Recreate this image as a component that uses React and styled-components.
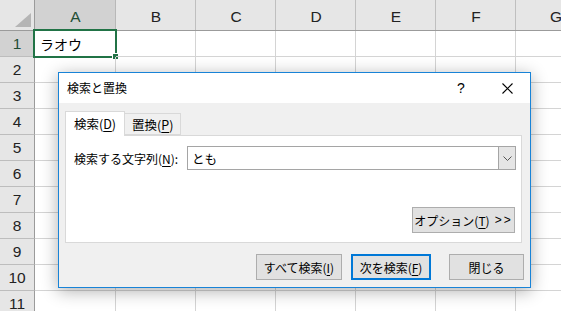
import React from "react";
import styled, { createGlobalStyle } from "styled-components";

const Global = createGlobalStyle`
  html, body { margin: 0; padding: 0; background: #fff; }
  body { width: 561px; height: 311px; overflow: hidden; }
  * { box-sizing: border-box; }
`;

const Page = styled.div`
  position: relative;
  width: 561px;
  height: 311px;
  overflow: hidden;
  font-family: "Noto Sans CJK JP", "Noto Sans", sans-serif;
`;

const Sheet = styled.div`
  display: grid;
  grid-template-columns: 35px 81px repeat(6, 80px);
  grid-template-rows: 31px;
  grid-auto-rows: 26px;
  width: 700px;
`;

const Corner = styled.div`
  background: #e6e6e6;
  border-right: 1px solid #9b9b9b;
  border-bottom: 1px solid #9b9b9b;
  display: flex;
  align-items: flex-end;
  justify-content: flex-end;
  padding: 0 3px 3px 0;
`;

const ColHeader = styled.div`
  background: ${(p) => (p.$active ? "#d2d2d2" : "#e6e6e6")};
  border-bottom: 1px solid #9b9b9b;
  box-shadow: inset -1px 0 0 ${(p) => (p.$active ? "#b8b8b8" : "#bfbfbf")};
  display: flex;
  align-items: center;
  justify-content: center;
  padding-top: 4px;
  font-family: "Liberation Sans", Arial, sans-serif;
  font-size: 15.5px;
  color: ${(p) => (p.$active ? "#1f4e35" : "#222")};
`;

const RowHeader = styled.div`
  background: ${(p) => (p.$active ? "#d2d2d2" : "#e6e6e6")};
  border-right: 1px solid #9b9b9b;
  border-bottom: 1px solid #bdbdbd;
  display: flex;
  align-items: center;
  justify-content: center;
  font-family: "Liberation Sans", Arial, sans-serif;
  font-size: 15.5px;
  color: ${(p) => (p.$active ? "#1f4e35" : "#222")};
`;

const Cell = styled.div`
  position: relative;
  border-right: 1px solid #d4d4d4;
  border-bottom: 1px solid #d4d4d4;
  display: flex;
  align-items: center;
  padding-left: 5px;
  font-size: 14px;
  color: #000;
`;

const Selection = styled.div`
  position: absolute;
  left: -2px;
  top: -2px;
  right: -2px;
  bottom: -2px;
  border: 2px solid #217346;
  pointer-events: none;
`;

const Handle = styled.div`
  position: absolute;
  right: -3px;
  bottom: -3px;
  width: 6px;
  height: 6px;
  background: #217346;
  border-left: 1px solid #fff;
  border-top: 1px solid #fff;
`;

const Dialog = styled.div`
  position: absolute;
  left: 58px;
  top: 72px;
  width: 473px;
  border: 1px solid #1883d7;
  background: #f0f0f0;
  box-shadow: 0 3px 16px rgba(0, 0, 0, 0.32);
  font-size: 12px;
  color: #000;
  display: flex;
  flex-direction: column;
`;

const TitleBar = styled.div`
  height: 30px;
  background: #fff;
  display: flex;
  align-items: center;
  padding-left: 8px;
`;

const Title = styled.div`
  flex: 1;
  padding-bottom: 1px;
`;

const TitleButton = styled.div`
  width: 46px;
  height: 30px;
  display: flex;
  align-items: center;
  justify-content: center;
  font-family: "Liberation Sans", Arial, sans-serif;
  font-size: 14px;
`;

const Body = styled.div`
  display: flex;
  flex-direction: column;
  padding: 8px 6px 7px 6px;
`;

const Tabs = styled.div`
  display: flex;
  align-items: flex-end;
  height: 24px;
  position: relative;
  z-index: 1;
`;

const Tab = styled.div`
  height: ${(p) => (p.$active ? "25px" : "22px")};
  margin-bottom: ${(p) => (p.$active ? "-1px" : "0")};
  padding: 0 ${(p) => (p.$active ? "8px" : "7px")};
  background: ${(p) => (p.$active ? "#fff" : "#f0f0f0")};
  border: 1px solid #d9d9d9;
  border-bottom: ${(p) => (p.$active ? "none" : "1px solid #d9d9d9")};
  margin-left: ${(p) => (p.$active ? "0" : "-1px")};
  display: flex;
  align-items: center;
  padding-bottom: ${(p) => (p.$active ? "2px" : "0")};
  font-size: 12.5px;
`;

const Panel = styled.div`
  height: 108px;
  margin-right: 2px;
  background: #fff;
  border: 1px solid #d9d9d9;
  padding: 10px 5px 9px 8px;
  display: flex;
  flex-direction: column;
`;

const FieldRow = styled.div`
  display: flex;
  align-items: center;
`;

const Label = styled.div`
  width: 113px;
  font-size: 12px;
`;

const Combo = styled.div`
  flex: 1;
  height: 24px;
  border: 1px solid #a5a5a5;
  display: flex;
  align-items: stretch;
`;

const ComboText = styled.div`
  flex: 1;
  display: flex;
  align-items: center;
  padding-left: 4px;
  font-size: 12.5px;
`;

const ComboButton = styled.div`
  width: 17px;
  background: #e5e5e5;
  border-left: 1px solid #a5a5a5;
  display: flex;
  align-items: center;
  justify-content: center;
`;

const OptionsRow = styled.div`
  margin-top: auto;
  display: flex;
  justify-content: flex-end;
  padding-right: 1px;
`;

const Button = styled.div`
  width: ${(p) => p.$w}px;
  height: 26px;
  background: #e1e1e1;
  border: ${(p) => (p.$focus ? "2px solid #0078d7" : "1px solid #adadad")};
  display: flex;
  align-items: center;
  justify-content: center;
  font-size: 12px;
  white-space: nowrap;
`;

const Arrows = styled.span`
  margin-left: 5px;
  letter-spacing: 2px;
  font-family: "Liberation Sans", Arial, sans-serif;
  font-size: 12px;
`;

const ButtonRow = styled.div`
  margin-top: 11px;
  display: flex;
  justify-content: flex-end;
`;

const Key = styled.span`
  text-decoration: underline;
  text-underline-offset: 2px;
`;

const Spacer = styled.div`
  width: ${(p) => p.$w}px;
`;

const cols = ["A", "B", "C", "D", "E", "F", "G"];
const rows = [1, 2, 3, 4, 5, 6, 7, 8, 9, 10, 11];

export default function App() {
  return (
    <Page>
      <Global />
      <Sheet>
        <Corner>
          <svg width="16" height="14" viewBox="0 0 16 14">
            <polygon points="16,0 16,14 0,14" fill="#b5b5b5" />
          </svg>
        </Corner>
        {cols.map((c) => (
          <ColHeader key={c} $active={c === "A"}>
            {c}
          </ColHeader>
        ))}
        {rows.map((r) => (
          <React.Fragment key={r}>
            <RowHeader $active={r === 1}>{r}</RowHeader>
            {cols.map((c) => (
              <Cell key={c}>
                {r === 1 && c === "A" && (
                  <>
                    ラオウ
                    <Selection>
                      <Handle />
                    </Selection>
                  </>
                )}
              </Cell>
            ))}
          </React.Fragment>
        ))}
      </Sheet>

      <Dialog>
        <TitleBar>
          <Title>検索と置換</Title>
          <TitleButton>?</TitleButton>
          <TitleButton>
            <svg width="11" height="11" viewBox="0 0 11 11">
              <path d="M0.5 0.5 L10.5 10.5 M10.5 0.5 L0.5 10.5" stroke="#000" strokeWidth="1.1" fill="none" />
            </svg>
          </TitleButton>
        </TitleBar>
        <Body>
          <Tabs>
            <Tab $active>
              検索(<Key>D</Key>)
            </Tab>
            <Tab>
              置換(<Key>P</Key>)
            </Tab>
          </Tabs>
          <Panel>
            <FieldRow>
              <Label>
                検索する文字列(<Key>N</Key>):
              </Label>
              <Combo>
                <ComboText>とも</ComboText>
                <ComboButton>
                  <svg width="9" height="5" viewBox="0 0 9 5">
                    <path d="M0.5 0.5 L4.5 4.5 L8.5 0.5" stroke="#555" strokeWidth="1" fill="none" />
                  </svg>
                </ComboButton>
              </Combo>
            </FieldRow>
            <OptionsRow>
              <Button $w={103}>
                オプション(<Key>T</Key>)<Arrows>&gt;&gt;</Arrows>
              </Button>
            </OptionsRow>
          </Panel>
          <ButtonRow>
            <Button $w={86}>
              すべて検索(<Key>I</Key>)
            </Button>
            <Spacer $w={9} />
            <Button $w={80} $focus>
              次を検索(<Key>F</Key>)
            </Button>
            <Spacer $w={18} />
            <Button $w={75}>閉じる</Button>
          </ButtonRow>
        </Body>
      </Dialog>
    </Page>
  );
}
